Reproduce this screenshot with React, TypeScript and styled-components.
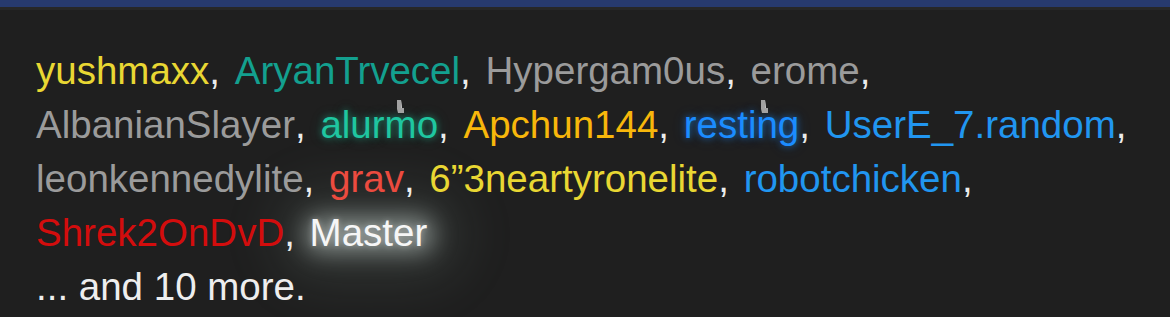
import styled, { createGlobalStyle, css } from 'styled-components';

const GlobalStyle = createGlobalStyle`
  html, body {
    margin: 0;
    padding: 0;
    background: #1f1f1f;
  }
`;

type Tone = 'yellow' | 'teal' | 'gray' | 'mint' | 'amber' | 'bright' | 'blue' | 'coral' | 'red' | 'white';

const colors: Record<Tone, string> = {
  yellow: '#e9d733',
  teal: '#13a08f',
  gray: '#9b9b9b',
  mint: '#1fc6a0',
  amber: '#f8b70b',
  bright: '#1b8cff',
  blue: '#2196f0',
  coral: '#ec4b3f',
  red: '#d30d0d',
  white: '#f6f6f6',
};

const glows: Partial<Record<Tone, ReturnType<typeof css>>> = {
  mint: css`text-shadow: 0 0 6px rgba(31, 198, 160, 0.55), 0 0 14px rgba(31, 198, 160, 0.25);`,
  bright: css`text-shadow: 0 0 6px rgba(27, 140, 255, 0.6), 0 0 14px rgba(27, 140, 255, 0.25);`,
  white: css`
    text-shadow: 0 0 6px rgba(255, 255, 255, 0.35);
    &::before {
      content: '';
      position: absolute;
      left: -4px;
      right: -6px;
      top: 6px;
      bottom: 2px;
      z-index: -1;
      border-radius: 12px;
      background: rgba(200, 214, 209, 0.6);
      box-shadow: 0 0 50px 26px rgba(140, 165, 158, 0.16);
      filter: blur(12px);
    }
  `,
};

const Page = styled.div`
  width: 1170px;
  height: 317px;
  overflow: hidden;
  background: #1f1f1f;
  font-family: 'Liberation Sans', Arial, Helvetica, sans-serif;
`;

const TopBar = styled.div`
  height: 7px;
  background: #273a6e;
  border-bottom: 3px solid #272727;
`;

const Names = styled.div`
  position: relative;
  z-index: 0;
  padding: 34px 38px 0 36px;
  font-size: 38.5px;
  line-height: 54px;
  color: #ececec;
`;

const Name = styled.span<{ $tone: Tone }>`
  position: relative;
  color: ${p => colors[p.$tone]};
  ${p => glows[p.$tone]}
`;

const Sep = styled.span`
  word-spacing: 4px;
`;

const Badge = styled.svg<{ $left: number }>`
  position: absolute;
  left: ${p => p.$left}px;
  top: -3px;
  width: 8px;
  height: 13px;
`;

const More = styled.div`
  color: #eeeeee;
`;

const list: { name: string; tone: Tone; badge?: number }[] = [
  { name: 'yushmaxx', tone: 'yellow' },
  { name: 'AryanTrvecel', tone: 'teal' },
  { name: 'Hypergam0us', tone: 'gray' },
  { name: 'erome', tone: 'gray' },
  { name: 'AlbanianSlayer', tone: 'gray' },
  { name: 'alurmo', tone: 'mint', badge: 77 },
  { name: 'Apchun144', tone: 'amber' },
  { name: 'resting', tone: 'bright', badge: 77 },
  { name: 'UserE_7.random', tone: 'blue' },
  { name: 'leonkennedylite', tone: 'gray' },
  { name: 'grav', tone: 'coral' },
  { name: '6\u201d3neartyronelite', tone: 'yellow' },
  { name: 'robotchicken', tone: 'blue' },
  { name: 'Shrek2OnDvD', tone: 'red' },
  { name: 'Master', tone: 'white' },
];

export default function App() {
  return (
    <Page>
      <GlobalStyle />
      <TopBar />
      <Names>
        {list.map((u, i) => (
          <span key={u.name}>
            <Name $tone={u.tone}>
              {u.name}
              {u.badge !== undefined && (
                <Badge $left={u.badge} viewBox="0 0 8 13">
                  <path d="M0 0 H4 L5 8 H7 V13 H1 L0 9 Z" fill="#a2a2a2" />
                  <path d="M4 0 L5 8 H4 Z" fill="#c4c4c4" />
                </Badge>
              )}
            </Name>
            {i < list.length - 1 && <Sep>, </Sep>}
          </span>
        ))}
        <More>... and 10 more.</More>
      </Names>
    </Page>
  );
}
